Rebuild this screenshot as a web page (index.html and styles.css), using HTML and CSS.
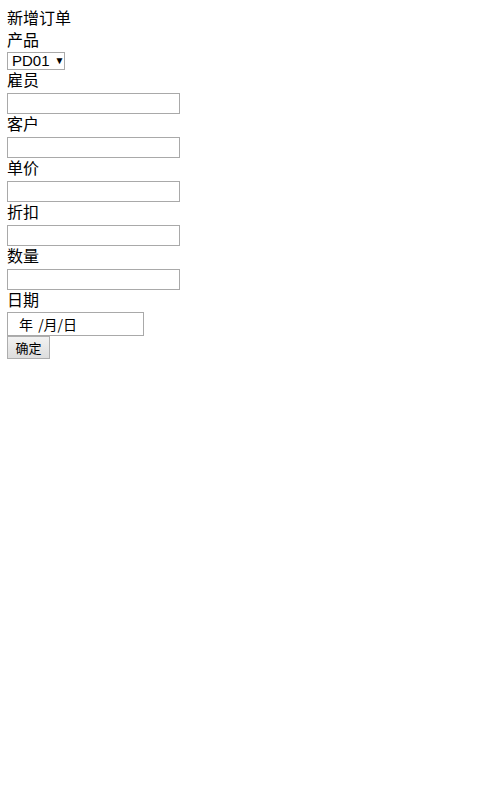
FILE: index.html
```html
<!DOCTYPE html>
<html lang="zh">
<head>
<meta charset="utf-8">
<title>新增订单</title>
<link rel="stylesheet" href="styles.css">
</head>
<body>
<form class="order-form">
  <div class="title">新增订单</div>
  <label class="label">产品</label>
  <div class="select"><span class="select-value">PD01</span><span class="select-arrow">▼</span></div>
  <label class="label">雇员</label>
  <input class="text-input" type="text">
  <label class="label">客户</label>
  <input class="text-input" type="text">
  <label class="label">单价</label>
  <input class="text-input" type="text">
  <label class="label">折扣</label>
  <input class="text-input" type="text">
  <label class="label">数量</label>
  <input class="text-input" type="text">
  <label class="label">日期</label>
  <div class="date-input">年 /月/日</div>
  <button class="submit" type="button">确定</button>
</form>
</body>
</html>
```
FILE: styles.css
```css
html, body {
  background: #fff;
}
body {
  margin: 8px 7px;
  font-family: "Liberation Sans", "Noto Sans CJK SC", sans-serif;
  font-size: 16px;
  color: #000;
}
.order-form {
  display: flex;
  flex-direction: column;
  align-items: flex-start;
}
.title,
.label {
  display: block;
  height: 22px;
  line-height: 22px;
}
.select {
  display: flex;
  align-items: center;
  box-sizing: border-box;
  height: 18px;
  width: 58px;
  border: 1px solid #a9a9a9;
  padding: 0 0 0 4px;
  font-size: 15px;
  line-height: 16px;
}
.select-value {
  font-family: "Liberation Sans", sans-serif;
}
.select-arrow {
  font-size: 10px;
  margin-left: 5px;
}
.text-input {
  box-sizing: border-box;
  width: 173px;
  height: 21px;
  margin: 1px 0 0;
  border: 1px solid #a9a9a9;
  padding: 0 2px;
  font: inherit;
}
.date-input {
  box-sizing: border-box;
  width: 137px;
  height: 24px;
  border: 1px solid #a9a9a9;
  padding-left: 11px;
  font-size: 14px;
  line-height: 22px;
  font-family: "Noto Sans CJK SC", sans-serif;
  word-spacing: 2px;
}
.submit {
  box-sizing: border-box;
  height: 23px;
  width: 43px;
  margin: 0;
  padding: 0;
  border: 1px solid #adadad;
  border-radius: 0;
  background: linear-gradient(#f2f2f2, #dddddd);
  font-family: "Noto Sans CJK SC", sans-serif;
  font-size: 13px;
  line-height: 20px;
  color: #000;
}
```
